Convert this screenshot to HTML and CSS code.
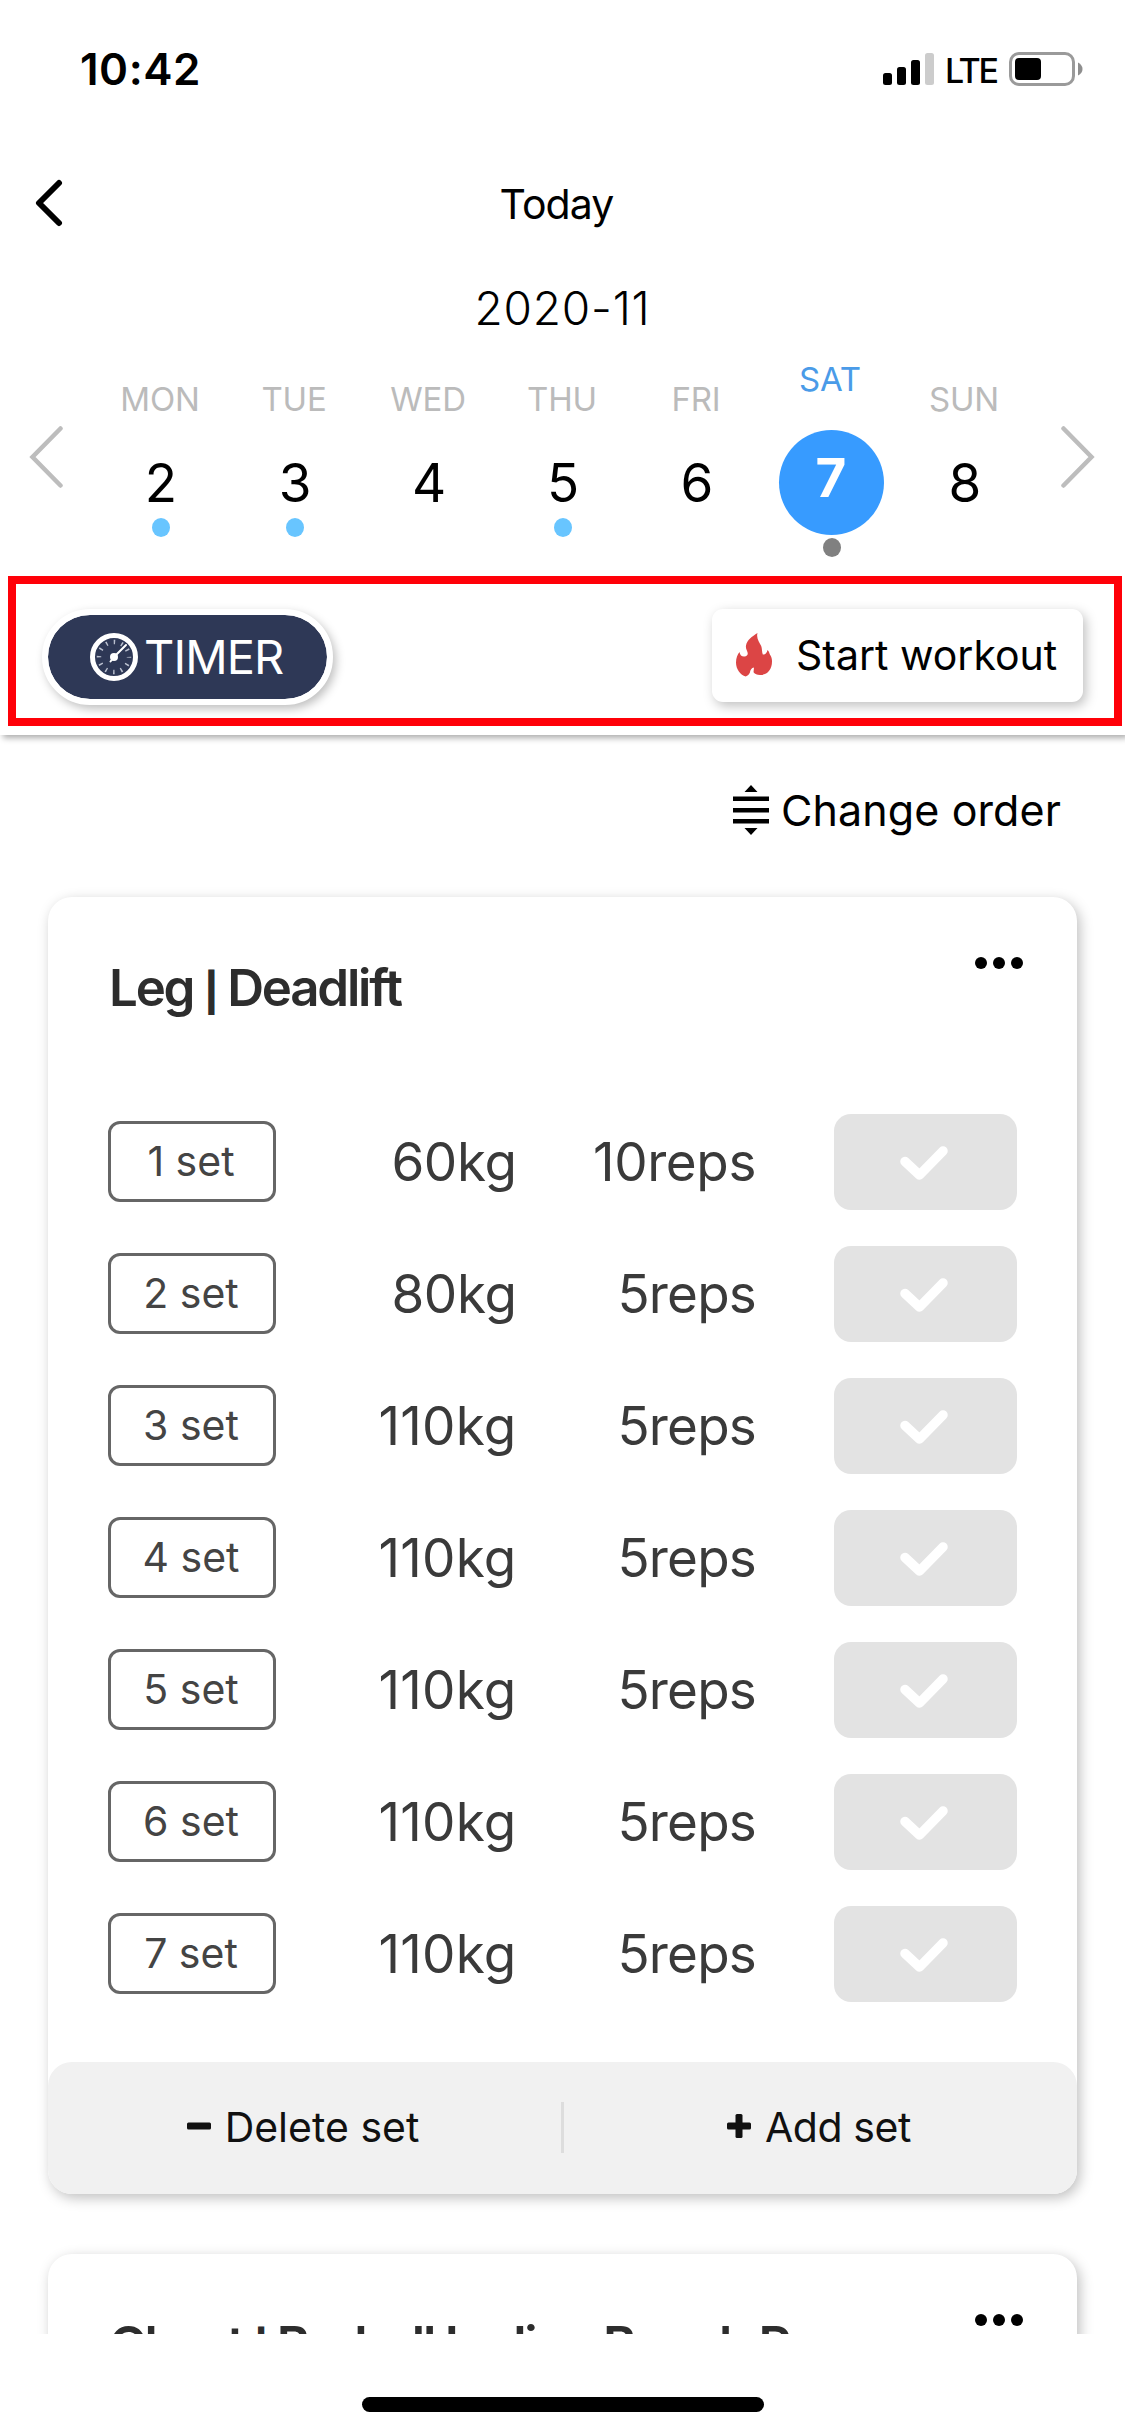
FILE: index.html
```html
<!DOCTYPE html>
<html lang="en">
<head>
<meta charset="utf-8">
<title>Today</title>
<link rel="stylesheet" href="styles.css">
</head>
<body>
<svg width="0" height="0" class="sprite" aria-hidden="true">
  <symbol id="check" viewBox="0 0 48 34"><path d="M5 15.500 19.500 29 43 5" fill="none" stroke="#fff" stroke-width="9.500" stroke-linecap="round" stroke-linejoin="round"/></symbol>
  <symbol id="more" viewBox="0 0 48 12"><circle cx="6" cy="6" r="6"/><circle cx="24" cy="6" r="6"/><circle cx="42" cy="6" r="6"/></symbol>
</svg>
<div class="screen">
  <header class="header">
    <div class="status">
      <div class="clock">10:42</div>
      <div class="indicators">
        <svg class="signal" viewBox="0 0 51 32"><rect x="0" y="20" width="9" height="12" rx="2.5"/><rect x="14" y="14" width="9" height="18" rx="2.5"/><rect x="28" y="7" width="9" height="25" rx="2.5"/><rect x="42" y="0" width="9" height="32" rx="2.5" fill="#ccc"/></svg>
        <span class="network">LTE</span>
        <svg class="battery" viewBox="0 0 74 34"><rect x="1.5" y="1.5" width="63" height="31" rx="8.5" fill="none" stroke="#9a9a9a" stroke-width="3"/><rect x="6" y="6" width="26" height="22" rx="4"/><path d="M69 10.500q4.500 2.500 4.500 6.500t-4.500 6.500z" fill="#8e8e8e"/></svg>
      </div>
    </div>
    <nav class="nav">
      <svg class="back" viewBox="0 0 30 48"><path d="M26 4 6 24 26 44" fill="none" stroke="#000" stroke-width="6" stroke-linecap="round" stroke-linejoin="round"/></svg>
      <h1 class="nav-title">Today</h1>
    </nav>
    <div class="month">2020-11</div>
    <div class="week">
      <svg class="arrow" viewBox="0 0 34 62"><path d="M31.500 2.500 3.500 31 31.500 59.500" fill="none" stroke="#bdbdbd" stroke-width="4.500" stroke-linecap="round"/></svg>
      <div class="days">
        <div class="day"><span class="label">MON</span><span class="num">2</span><i class="dot"></i></div>
        <div class="day"><span class="label">TUE</span><span class="num">3</span><i class="dot"></i></div>
        <div class="day"><span class="label">WED</span><span class="num">4</span></div>
        <div class="day"><span class="label">THU</span><span class="num">5</span><i class="dot"></i></div>
        <div class="day"><span class="label">FRI</span><span class="num">6</span></div>
        <div class="day selected"><span class="label">SAT</span><span class="num">7</span><i class="dot"></i></div>
        <div class="day"><span class="label">SUN</span><span class="num">8</span></div>
      </div>
      <svg class="arrow" viewBox="0 0 34 62"><path d="M2.500 2.500 30.500 31 2.500 59.500" fill="none" stroke="#bdbdbd" stroke-width="4.500" stroke-linecap="round"/></svg>
    </div>
    <div class="actions">
      <button class="timer">
        <svg class="gauge" viewBox="0 0 48 48"><circle cx="24" cy="24" r="21.500" fill="none" stroke="#fff" stroke-width="5"/><circle cx="24" cy="24" r="15" fill="none" stroke="#b9bfce" stroke-width="4.500" stroke-dasharray="1.500 6.354" stroke-dashoffset=".75"/><path d="M20.500 28.500 24 24 36 12" fill="none" stroke="#fff" stroke-width="2" stroke-linecap="round"/><circle cx="24" cy="24" r="4" fill="#fff"/></svg>
        <span>TIMER</span>
      </button>
      <button class="start">
        <svg class="flame" viewBox="0 0 36 44"><path d="M21.500 0C20 5.500 23.500 9 25.200 13c1 2.600.6 6 1.600 8.500 2.200.6 4.200-1.500 4.700-4.500 2 1.500 1.500 3.500 3 5.500 1 1.500 1.500 3.500 1.500 6 0 8-4.500 13.200-11.500 13.500-3.500.1-5.500-1-6.800-2.500-.5-1.500.7-3.700 0-5-2 .2-3.500 2.500-3.800 5-.7 2-2.200 3.200-4.200 4C4.500 42 0 36.500 0 29.500 0 25 1.500 21.500 3.500 19c.5 3.300 2.300 4.700 5 4.500 2.500-.2 3.800-1.800 3-4.300C10.800 17 9.500 15.500 10 12.500 11 7 16 3.500 21.500 0z" fill="#dc4545"/></svg>
        <span>Start workout</span>
      </button>
    </div>
  </header>

  <main class="content">
    <div class="order">
      <svg class="reorder" viewBox="0 0 36 50"><path d="M18 0 24.500 7h-13zM18 50 24.500 43h-13zM0 11.500h36v4.500H0zM0 23h36v4.500H0zM0 34h36v4.500H0z"/></svg>
      <span>Change order</span>
    </div>

    <section class="card">
      <div class="card-head"><h2 class="title">Leg <span class="bar">|</span> Deadlift</h2><svg class="more"><use href="#more"/></svg></div>
      <div class="sets">
        <div class="set"><span class="badge">1 set</span><span class="value">60kg</span><span class="value">10reps</span><button class="done"><svg class="check"><use href="#check"/></svg></button></div>
        <div class="set"><span class="badge">2 set</span><span class="value">80kg</span><span class="value reps">5reps</span><button class="done"><svg class="check"><use href="#check"/></svg></button></div>
        <div class="set"><span class="badge">3 set</span><span class="value wide">110kg</span><span class="value reps">5reps</span><button class="done"><svg class="check"><use href="#check"/></svg></button></div>
        <div class="set"><span class="badge">4 set</span><span class="value wide">110kg</span><span class="value reps">5reps</span><button class="done"><svg class="check"><use href="#check"/></svg></button></div>
        <div class="set"><span class="badge">5 set</span><span class="value wide">110kg</span><span class="value reps">5reps</span><button class="done"><svg class="check"><use href="#check"/></svg></button></div>
        <div class="set"><span class="badge">6 set</span><span class="value wide">110kg</span><span class="value reps">5reps</span><button class="done"><svg class="check"><use href="#check"/></svg></button></div>
        <div class="set"><span class="badge">7 set</span><span class="value wide">110kg</span><span class="value reps">5reps</span><button class="done"><svg class="check"><use href="#check"/></svg></button></div>
      </div>
      <div class="card-foot">
        <button class="foot-btn"><svg class="sign" viewBox="0 0 24 24"><rect y="8.500" width="24" height="7" rx="1.500"/></svg><span>Delete set</span></button>
        <i class="divider"></i>
        <button class="foot-btn add"><svg class="sign" viewBox="0 0 24 24"><rect y="8.500" width="24" height="7" rx="1.500"/><rect x="8.500" width="7" height="24" rx="1.500"/></svg><span>Add set</span></button>
      </div>
    </section>

    <section class="card">
      <div class="card-head"><h2 class="title">Chest <span class="bar">|</span> Barbell Incline Bench Press</h2><svg class="more"><use href="#more"/></svg></div>
    </section>
  </main>

  <footer class="home"><div class="home-bar"></div></footer>
</div>
</body>
</html>
```
FILE: styles.css
```css
* { box-sizing: border-box; margin: 0; padding: 0; }
body { background: #fff; font-family: Inter, "Liberation Sans", sans-serif; color: #000; }
button { border: 0; background: none; font: inherit; color: inherit; }
span, h1, h2 { white-space: nowrap; }
svg { display: block; flex: none; }
.sprite { position: absolute; }

.screen { width: 1125px; height: 2436px; display: flex; flex-direction: column; overflow: hidden; }

.header { height: 735px; flex: none; position: relative; z-index: 1; background: #fff; box-shadow: 3px 3px 6px rgba(0, 0, 0, .33); }

.status { height: 138px; padding: 0 42px 0 80px; display: flex; align-items: center; justify-content: space-between; }
.clock { font-size: 44px; font-weight: 600; letter-spacing: .5px; }
.indicators { display: flex; align-items: center; }
.signal { width: 51px; height: 32px; }
.network { width: 52px; margin: 3px 12px 0 11px; font-size: 34px; font-weight: 500; letter-spacing: -2.4px; }
.battery { width: 74px; height: 34px; }

.nav { height: 132px; display: grid; grid-template-columns: 120px 1fr 120px; align-items: center; }
.back { width: 30px; height: 48px; margin: -2px 0 0 33px; }
.nav-title { text-align: center; font-size: 41px; font-weight: 400; letter-spacing: -.9px; margin-left: -12px; }
.month { height: 76px; line-height: 77px; text-align: center; font-size: 46px; font-weight: 300; letter-spacing: .8px; }

.week { height: 230px; display: flex; justify-content: space-between; padding: 0 30px 0 29px; }
.arrow { width: 34px; height: 62px; margin-top: 80px; }
.days { display: grid; grid-template-columns: repeat(7, 134px); }
.day { display: flex; flex-direction: column; align-items: center; padding-top: 34px; }
.label { height: 40px; line-height: 39px; font-size: 33px; letter-spacing: -.2px; color: #bbb; }
.num { height: 70px; line-height: 70px; margin: 28px 0 0 2px; font-size: 53px; }
.dot { width: 18px; height: 19px; margin-left: 1px; border-radius: 50%; background: #68c5ff; }
.selected { padding-top: 13px; }
.selected .label { line-height: 41px; color: #4a9be8; }
.selected .num { width: 105px; height: 105px; line-height: 96px; margin: 31px 0 2px 2px; border-radius: 50%; background: #379bff; color: #fff; font-weight: 700; text-align: center; }
.selected .dot { background: #808080; margin: 1px 0 0 3px; }

.actions { height: 150px; margin: 0 3px 0 8px; border: 8px solid #ff0008; padding: 25px 31px 0 26px; display: flex; justify-content: space-between; align-items: flex-start; }
.timer { width: 291px; height: 96px; border: 6px solid #fff; border-radius: 48px; background: #2e3856; background-clip: padding-box; color: #fff; font-size: 47px; letter-spacing: -.9px; display: flex; align-items: center; gap: 6px; padding: 0 0 1px 42px; box-shadow: 3px 4px 10px rgba(0, 0, 0, .25); }
.gauge { width: 48px; height: 48px; }
.start { width: 371px; height: 93px; border-radius: 11px; background: #fff; font-size: 41px; display: flex; align-items: center; gap: 24px; padding: 0 0 1px 24px; box-shadow: 3px 4px 12px rgba(0, 0, 0, .25); }
.flame { width: 36px; height: 44px; }

.content { height: 1599px; flex: none; overflow: hidden; padding: 0 48px; display: flex; flex-direction: column; }
.order { height: 162px; flex: none; padding: 50px 16px 0 0; display: flex; justify-content: flex-end; align-items: flex-start; gap: 12px; font-size: 43px; line-height: 50px; letter-spacing: .1px; }
.reorder { width: 36px; height: 50px; }

.card { flex: none; border-radius: 24px; background: #fff; box-shadow: 3px 4px 13px rgba(0, 0, 0, .25); margin-bottom: 60px; }
.card-head { height: 217px; padding: 60px 54px 0 61px; display: flex; justify-content: space-between; align-items: flex-start; }
.title { font-size: 51px; line-height: 61px; font-weight: 600; letter-spacing: -2.2px; color: #2d2d2d; }
.bar { font-size: 38px; font-weight: 800; line-height: 1; }
.more { width: 48px; height: 12px; }
.sets { padding: 0 60px 60px; display: grid; gap: 36px; }
.set { height: 96px; display: grid; grid-template-columns: 168px 240.5px 239.5px 1fr; align-items: center; }
.badge { height: 81px; line-height: 75px; margin-top: -1px; padding-right: 2px; border: 3px solid #666; border-radius: 12px; text-align: center; font-size: 41px; color: #444; }
.value { text-align: right; font-size: 53px; letter-spacing: -.4px; color: #3a3a3a; }
.wide { letter-spacing: .2px; }
.reps { letter-spacing: -.8px; }
.done { width: 183px; height: 96px; justify-self: end; border-radius: 17px; background: #e3e3e3; display: flex; align-items: center; padding-left: 66px; }
.check { width: 48px; height: 34px; margin-top: 2px; }

.card-foot { height: 132px; border-radius: 24px; background: #f1f1f1; display: grid; grid-template-columns: 1fr 3px 1fr; align-items: center; font-size: 41px; color: #111; }
.foot-btn { height: 100%; display: flex; align-items: center; justify-content: center; gap: 14px; padding: 0 3px 2px 0; fill: #111; }
.add { letter-spacing: -.4px; padding-right: 3px; gap: 14px; }
.sign { width: 24px; height: 24px; margin-top: -2px; }
.divider { height: 51px; margin-top: -2px; background: #ddd; }

.home { flex: 1; display: flex; justify-content: center; padding-top: 63px; }
.home-bar { width: 402px; height: 15px; border-radius: 8px; background: #000; }
```
